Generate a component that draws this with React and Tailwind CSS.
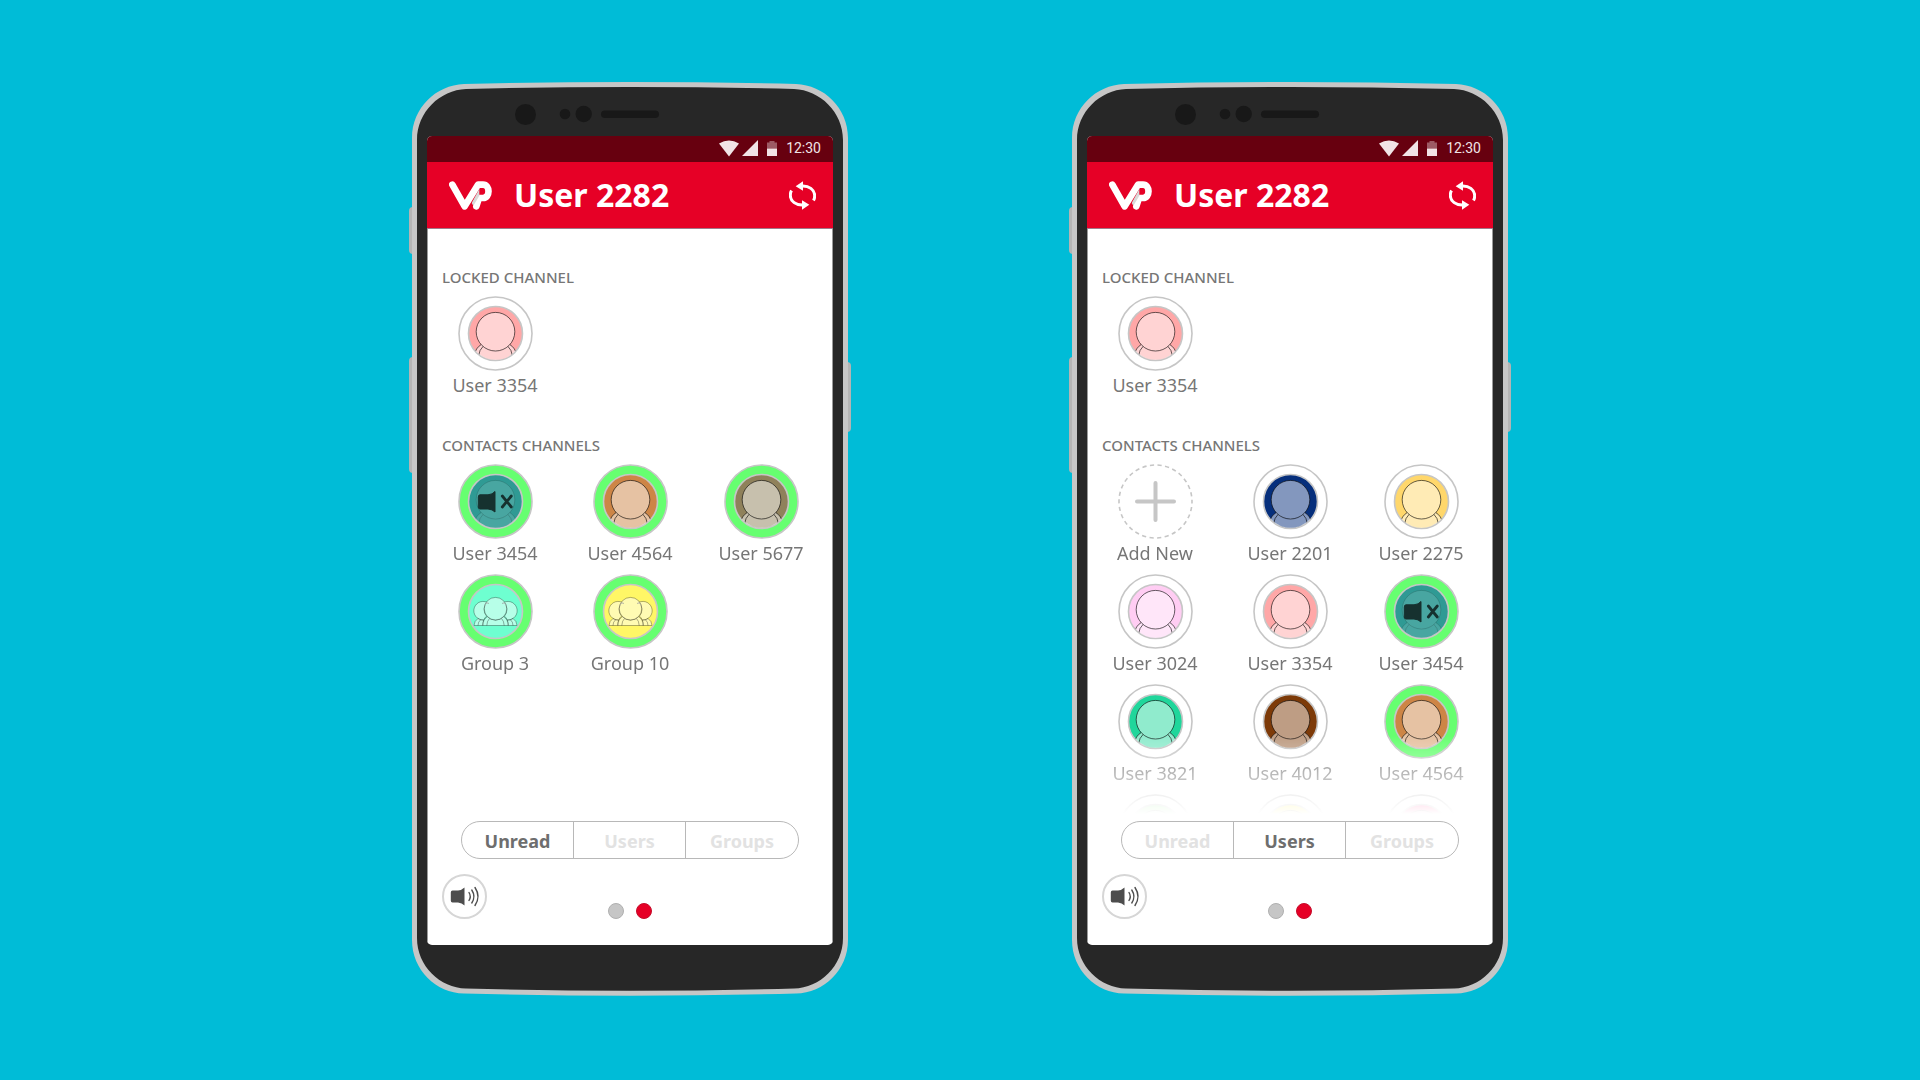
import React from "react";

const TEXT = "font-['Noto_Sans','Open_Sans',sans-serif]";

const PINK = "#ffa7a7";

const unreadContacts = [
  { name: "User 3454", color: "#2f9a94", kind: "muted", online: true },
  { name: "User 4564", color: "#cd8546", kind: "user", online: true },
  { name: "User 5677", color: "#8f815b", kind: "user", online: true },
  { name: "Group 3", color: "#6effd0", kind: "group", online: true },
  { name: "Group 10", color: "#fff766", kind: "group", online: true },
];

const userContacts = [
  { name: "Add New", kind: "add" },
  { name: "User 2201", color: "#062f7c", kind: "user" },
  { name: "User 2275", color: "#ffd76b", kind: "user" },
  { name: "User 3024", color: "#ffcdf3", kind: "user" },
  { name: "User 3354", color: PINK, kind: "user" },
  { name: "User 3454", color: "#2f9a94", kind: "muted", online: true },
  { name: "User 3821", color: "#20d69b", kind: "user" },
  { name: "User 4012", color: "#7d3a08", kind: "user" },
  { name: "User 4564", color: "#cd8546", kind: "user", online: true },
  { color: "#a8efa0", kind: "user" },
  { color: "#fff34a", kind: "user" },
  { color: "#ff4f94", kind: "user" },
];

function Person({ faint }) {
  const clip = React.useId();
  return (
    <g
      fill="#fff"
      fillOpacity={faint ? 0.12 : 0.5}
      stroke="#000"
      strokeOpacity={faint ? 0.15 : 0.6}
      strokeWidth="1"
    >
      <clipPath id={clip}>
        <circle cx="37.5" cy="37.5" r="26.5" />
      </clipPath>
      <g clipPath={`url(#${clip})`}>
        <path
          stroke="none"
          d="M16 60Q17.500 52 23.200 48.600A19.500 19.500 0 0 0 51.800 48.600Q57.500 52 59 60V68H16Z"
        />
        <path
          fill="none"
          d="M16.500 59Q17.500 52 23.200 48.600M20.800 59Q21.300 54 25 50.500M58.500 59Q57.500 52 51.800 48.600M54.200 59Q53.700 54 50 50.500"
        />
      </g>
      <circle cx="37.500" cy="35.700" r="19.300" />
    </g>
  );
}

function Group() {
  return (
    <g fill="#fff" fillOpacity="0.5" stroke="#000" strokeOpacity="0.4" strokeWidth="0.8">
      <path d="M31 29.500A9.300 9.300 0 1 0 25.500 46Q27 43.500 28.500 42.200A11.300 11.300 0 0 1 28 29.500Z" />
      <path d="M44 29.500A9.300 9.300 0 1 1 49.500 46Q48 43.500 46.500 42.200A11.300 11.300 0 0 0 47 29.500Z" />
      <path d="M16 51.500Q16.200 47 20 44.500Q22.500 46.200 25.600 46.200Q24.800 48.500 24.800 51.500Z" />
      <path d="M59 51.500Q58.800 47 55 44.500Q52.500 46.200 49.400 46.200Q50.200 48.500 50.200 51.500Z" />
      <path d="M24.800 51.500Q25 45.500 29.300 42.600A11.300 11.300 0 0 0 45.700 42.600Q50 45.500 50.200 51.500Z" />
      <path fill="none" d="M20 51.500Q20 48 22.500 45.800M55 51.500Q55 48 52.500 45.800M28.800 51.500Q29 47 31.500 44.500M46.200 51.500Q46 47 43.500 44.500" />
      <circle cx="37.500" cy="34.700" r="11.300" />
    </g>
  );
}

function MutedMark() {
  return (
    <g fill="#16312f" stroke="#16312f">
      <path
        strokeWidth="1"
        strokeLinejoin="round"
        d="M22 30.800H30Q34.500 30.500 37 27.500V48Q34.500 45.300 30 45H22Q20.300 45 20.300 43V33Q20.300 30.800 22 30.800Z"
      />
      <path fill="none" strokeWidth="2.800" strokeLinecap="round" d="M44.300 32L53.300 43M53.300 32L44.300 43" />
    </g>
  );
}

function Avatar({ contact }) {
  if (contact.kind === "add") {
    return (
      <svg viewBox="0 0 75 75" className="size-[75px]" aria-hidden="true" fill="none" stroke="#c6c6c6">
        <circle cx="37.500" cy="37.500" r="36.500" strokeWidth="1.600" strokeDasharray="4.200 3.445" strokeDashoffset="2.100" />
        <path strokeWidth="4" strokeLinecap="round" d="M37.500 19V56M19 37.500H56" />
      </svg>
    );
  }
  return (
    <svg viewBox="0 0 75 75" className="size-[75px]" aria-hidden="true">
      <circle
        cx="37.500"
        cy="37.500"
        r="36.500"
        fill={contact.online ? "#66ff70" : "#fff"}
        stroke="#c6c6c6"
        strokeWidth="1.600"
      />
      <circle cx="37.500" cy="37.500" r="27" fill={contact.color} stroke="#c6c6c6" strokeWidth="1.600" />
      {contact.kind === "group" ? <Group /> : <Person faint={contact.kind === "muted"} />}
      {contact.kind === "muted" && <MutedMark />}
    </svg>
  );
}

function Contact({ contact }) {
  return (
    <button type="button" aria-label={contact.name ? undefined : "Contact"} className="flex flex-col items-center">
      <Avatar contact={contact} />
      {contact.name && (
        <span className="text-lg leading-7 whitespace-nowrap text-[#767676]">{contact.name}</span>
      )}
    </button>
  );
}

function ContactGrid({ contacts }) {
  return (
    <div className="grid grid-cols-[134fr_136fr_126fr] gap-y-[7px] pr-2">
      {contacts.map((c, i) => (
        <Contact key={i} contact={c} />
      ))}
    </div>
  );
}

function Heading({ children }) {
  return <h2 className="mb-[7px] px-[14px] text-[15px] leading-6 font-medium text-[#767676]">{children}</h2>;
}

function StatusBar() {
  return (
    <div className="flex h-[26px] items-center justify-end bg-[#67000f] pr-3 pb-[2px] text-[#f1e4e6]">
      <svg viewBox="0 0 20 17" className="mr-[3px] h-[17px] w-5" fill="currentColor" aria-hidden="true">
        <path d="M0 3.500Q10-2.500 20 3.500L10 16.500Z" />
      </svg>
      <svg viewBox="0 0 16 16" className="mr-[9px] size-4" fill="currentColor" aria-hidden="true">
        <path d="M16 0V16H0Z" />
      </svg>
      <svg viewBox="0 0 10 15" className="mr-[9px] h-[15px] w-[10px]" fill="currentColor" aria-hidden="true">
        <path opacity="0.400" d="M2.500 0H7.500V1.500H10V7.500H0V1.500H2.500Z" />
        <path d="M0 7.500H10V15H0Z" />
      </svg>
      <span className="font-['Roboto',sans-serif] text-sm leading-6">12:30</span>
    </div>
  );
}

function Logo() {
  return (
    <svg viewBox="0 0 129 87" className="h-[29px] w-[43px]" role="img" aria-label="VP" fill="none">
      <g stroke="#fff" strokeWidth="20" strokeLinecap="round" strokeLinejoin="round">
        <path d="M10 11L47 76L87 11H102C124 11 124 51 102 51H90L82 76" />
      </g>
      <path d="M91 24L68 66L73 74L91 44Z" fill="#d9d9d9" />
    </svg>
  );
}

function SyncIcon() {
  const half = (
    <>
      <path fill="none" stroke="#fff" strokeWidth="9" d="M36 14.500C60 12 77 26 77 44C77 50 76 54 73.500 58" />
      <path fill="#fff" d="M20 15L42 0V29Z" />
    </>
  );
  return (
    <svg viewBox="0 0 81 86" className="h-[29px] w-[27px]" aria-hidden="true">
      {half}
      <g transform="rotate(180 40.500 43)">{half}</g>
    </svg>
  );
}

function TabBar({ active }) {
  return (
    <div role="tablist" className="mx-[33px] mt-[5px] grid h-[38px] grid-cols-3 divide-x divide-[#b8b8b8] rounded-full border border-[#b8b8b8]">
      {["Unread", "Users", "Groups"].map((t) => (
        <button
          key={t}
          type="button"
          role="tab"
          aria-selected={t === active}
          className={"pt-[2px] text-lg leading-6 font-bold " + (t === active ? "text-[#6e6e6e]" : "text-[#e2e2e2]")}
        >
          {t}
        </button>
      ))}
    </div>
  );
}

function SpeakerButton() {
  return (
    <button type="button" aria-label="Speaker" className="size-[45px] justify-self-start rounded-full border-2 border-[#d6d6d6]">
      <svg viewBox="0 0 41 41" className="size-full" aria-hidden="true">
        <path
          fill="#4d4d4d"
          d="M8.500 14.500H14Q18 14 20.500 11.500V29.500Q18 27 14 26.500H8.500Q6.800 26.500 6.800 24.500V16.500Q6.800 14.500 8.500 14.500Z"
        />
        <path
          fill="none"
          stroke="#4d4d4d"
          strokeWidth="1.400"
          strokeLinecap="round"
          d="M25 16.500Q27.500 20.500 25 24.500M27.800 14Q32 20.500 27.800 27M31 11.500Q37 20.500 31 29.500"
        />
      </svg>
    </button>
  );
}

function PhoneBody() {
  return (
    <>
      <span className="absolute top-[125px] -left-[3px] h-[47px] w-2 rounded-l-sm bg-[#b4b4b4]" />
      <span className="absolute top-[275px] -left-[3px] h-[116px] w-2 rounded-l-sm bg-[#b4b4b4]" />
      <span className="absolute top-[280px] -right-[3px] h-[70px] w-2 rounded-r-sm bg-[#b4b4b4]" />
      <svg viewBox="0 0 436 914" preserveAspectRatio="none" className="absolute inset-0 size-full" aria-hidden="true">
        <path
          fill="#c6c6c6"
          d="M0 56C0 26 24 3 52 2Q218-2 384 2C412 3 436 26 436 56V858C436 888 412 911 384 911.500Q218 916 52 911.500C24 911 0 888 0 858Z"
        />
        <path
          fill="#272727"
          d="M5 58C5 30 28 8 54 7Q218 3 382 7C408 8 431 30 431 58V856C431 884 408 906 382 906.500Q218 911 54 906.500C28 906 5 884 5 856Z"
        />
        <g fill="#181818">
          <circle cx="113.500" cy="32.500" r="10.500" />
          <circle cx="153" cy="32" r="5.300" />
          <circle cx="171.700" cy="32" r="8.200" />
          <rect x="189" y="28.500" width="58" height="7.500" rx="3.750" />
        </g>
      </svg>
    </>
  );
}

function Phone({ active, contacts }) {
  return (
    <section className="relative w-[436px] max-w-full px-[15px] pt-[54px] pb-[51px]">
      <PhoneBody />
      <div className="relative overflow-hidden rounded-[5px] bg-white">
        <StatusBar />
        <header className="flex h-[67px] items-center border-b border-[#a0788a] bg-[#e60026] pr-[17px] pl-[22px]">
          <Logo />
          <h1 className="ml-[22px] flex-1 text-[32px] leading-10 font-bold text-white">User 2282</h1>
          <button type="button" aria-label="Sync">
            <SyncIcon />
          </button>
        </header>
        <div className="border-x border-[#9a9a9a]">
          <main className="pt-9">
            <Heading>LOCKED CHANNEL</Heading>
            <ContactGrid contacts={[{ name: "User 3354", color: PINK, kind: "user" }]} />
            <div className="mt-[34px]">
              <Heading>CONTACTS CHANNELS</Heading>
            </div>
            <div className="h-[352px] overflow-hidden [mask-image:linear-gradient(to_bottom,black_272px,transparent_350px)]">
              <ContactGrid contacts={contacts} />
            </div>
            <TabBar active={active} />
          </main>
          <footer className="mt-[15px] grid grid-cols-[1fr_auto_1fr] items-end px-[14px] pb-[26px]">
            <SpeakerButton />
            <div className="flex gap-3">
              <button type="button" aria-label="Page 1" className="size-4 rounded-full border border-[#b0b0b0] bg-[#c6c6c6]" />
              <button type="button" aria-label="Page 2" className="size-4 rounded-full border border-[#c50d2b] bg-[#e60026]" />
            </div>
          </footer>
        </div>
      </div>
    </section>
  );
}

export default function App() {
  return (
    <div className={"flex min-h-screen flex-wrap items-center justify-center gap-x-56 gap-y-16 bg-[#00bcd7] pb-[2px] " + TEXT}>
      <Phone active="Unread" contacts={unreadContacts} />
      <Phone active="Users" contacts={userContacts} />
    </div>
  );
}
